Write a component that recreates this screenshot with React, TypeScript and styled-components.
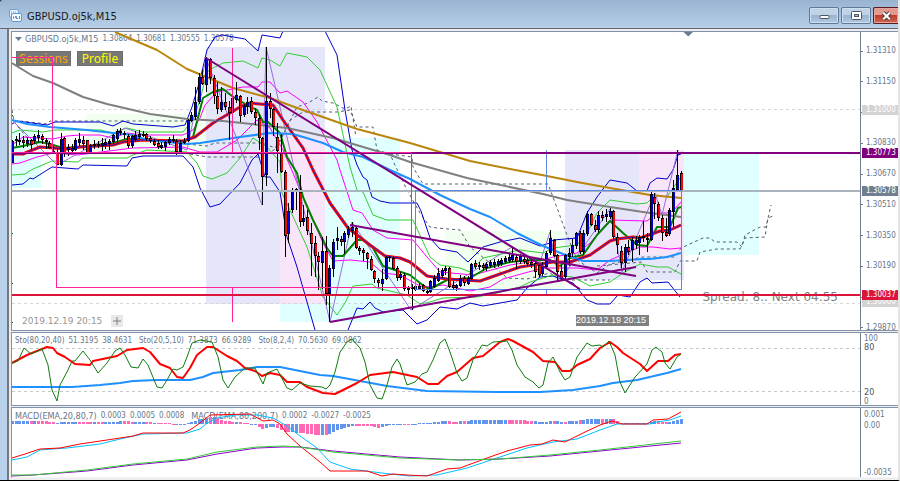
import React from "react";
import styled, { createGlobalStyle } from "styled-components";

const GlobalStyle = createGlobalStyle`
  * { box-sizing: border-box; }
  html, body { margin: 0; padding: 0; }
  body { background: #3a4048; font-family: "DejaVu Sans Condensed", "DejaVu Sans", sans-serif; }
`;

/* ---------- window chrome ---------- */

const Window = styled.div`
  display: flex;
  flex-direction: column;
  height: 100vh;
  min-height: 360px;
  overflow: hidden;
  background: #b9d1ea;
  border-right: 2px solid #e4e4e4;
  border-bottom: 1px solid #000;
  border-top-left-radius: 4px;
`;

const TitleBar = styled.header`
  display: flex;
  align-items: center;
  height: 29px;
  flex: none;
  padding: 3px 0 0 9px;
  gap: 5px;
  background: linear-gradient(#99b4d1, #b7cfe8);
  border-bottom: 1px solid #6c6468;
`;

const Title = styled.h1`
  flex: 1;
  margin: 0;
  padding-top: 2px;
  font-size: 11px;
  font-weight: 400;
  line-height: 16px;
  color: #1a1a1a;
`;

const Controls = styled.div`
  display: flex;
  gap: 2px;
  height: 17px;
`;

const ControlButton = styled.button<{ $danger?: boolean }>`
  display: flex;
  align-items: center;
  justify-content: center;
  width: ${(p) => (p.$danger ? 25 : 30)}px;
  height: 17px;
  padding: 0;
  border: 1px solid ${(p) => (p.$danger ? "#5a1c1c" : "#5f7896")};
  border-right-width: ${(p) => (p.$danger ? 0 : 1)}px;
  border-radius: ${(p) => (p.$danger ? "2px 0 0 2px" : "2px")};
  box-shadow: inset 0 0 0 1px ${(p) => (p.$danger ? "#e5a59c" : "#cfdfef")};
  background: ${(p) =>
    p.$danger
      ? "linear-gradient(#e29a8e 0 45%, #bf3a28 50%, #cf6a50)"
      : "linear-gradient(#bfd2e6 0 45%, #98b3d0 50%, #b2cae2)"};
`;

const Client = styled.main`
  flex: 1;
  min-height: 0;
  display: grid;
  grid-template-rows: minmax(0, 1fr) 74px 71px;
  gap: 1px;
  margin-left: 7px;
  padding: 2px 0 2px 2px;
  border-left: 2px solid #77787c;
  background: #eeeeee;
`;

const Panel = styled.section`
  display: flex;
  min-width: 0;
  min-height: 0;
  overflow: hidden;
  border: 1px solid #8292a8;
  border-right: 0;
  background: #fff;
  &:last-child {
    border-bottom-color: #f4f4f4;
  }
`;

const Plot = styled.div`
  position: relative;
  flex: 1;
  min-width: 0;
`;

/* Lines are painted over the legends, as the chart is the top layer. */
const Canvas = styled.svg`
  position: relative;
  z-index: 1;
  display: block;
  width: 100%;
  height: 100%;
  pointer-events: none;
`;

const Axis = styled.div`
  position: relative;
  flex: none;
  width: 38px;
  display: flex;
  flex-direction: column;
  justify-content: space-between;
  border-left: 1px solid #708090;
  font-size: 8px;
  line-height: 10px;
  color: #66768a;
`;

const PriceAxis = styled(Axis)`
  padding-top: 14px;
  margin-bottom: -3px;
`;

const Tick = styled.span`
  display: flex;
  align-items: center;
  gap: 3px;
  &::before {
    content: "";
    width: 2px;
    height: 1px;
    background: #708090;
  }
`;

const PriceTag = styled.span<{ $color: string }>`
  position: absolute;
  left: 1px;
  right: 0;
  height: 10px;
  margin-top: -5px;
  padding-left: 4px;
  color: #fff;
  background: ${(p) => p.$color};
`;

const SubAxis = styled(Axis)`
  padding: 1px 0 0 3px;
  margin-bottom: -1px;
`;

const TickGroup = styled.div<{ $line: number }>`
  display: flex;
  flex-direction: column;
  line-height: ${(p) => p.$line}px;
`;

const Level = styled.span<{ $dark?: boolean }>`
  font-size: ${(p) => (p.$dark ? 9 : 8)}px;
  color: ${(p) => (p.$dark ? "#4c5561" : "#66768a")};
`;

/* ---------- overlays on the plots ---------- */

const Legend = styled.div<{ $gap?: number }>`
  position: absolute;
  top: ${(p) => (p.$gap ? 2 : 3)}px;
  left: 3px;
  display: flex;
  align-items: center;
  gap: ${(p) => p.$gap ?? 7}px;
  line-height: 10px;
  color: #66768a;
  white-space: nowrap;
`;

const Series = styled.span<{ $small?: boolean }>`
  display: flex;
  gap: 4px;
  font-size: ${(p) => (p.$small ? 8 : 9)}px;
`;

const Value = styled.span`
  font-size: 8px;
`;

const Actions = styled.div`
  position: absolute;
  top: 19px;
  left: 4px;
  display: flex;
  gap: 6px;
`;

const ActionButton = styled.button<{ $color: string; $width: number }>`
  width: ${(p) => p.$width}px;
  height: 15px;
  padding: 0;
  border: 1px solid #6f6f6f;
  background: #787878;
  color: ${(p) => p.$color};
  font-family: "Noto Sans", "Open Sans", sans-serif;
  font-size: 12px;
  line-height: 13px;
  text-align: center;
`;

const Footer = styled.div`
  position: absolute;
  left: 10px;
  bottom: 3px;
  display: flex;
  align-items: center;
  gap: 9px;
  font-family: "DejaVu Sans", sans-serif;
  font-size: 9px;
  line-height: 12px;
  color: #969696;
`;

const AddButton = styled.button`
  display: flex;
  align-items: center;
  justify-content: center;
  width: 12px;
  height: 12px;
  padding: 0;
  border: 0;
  background: #e8e8e8;
`;

const DateMarker = styled.time`
  position: absolute;
  left: 66.5%;
  bottom: 4px;
  width: 73px;
  height: 11px;
  background: #808080;
  color: #fff;
  font-family: "Liberation Sans", sans-serif;
  font-size: 9px;
  line-height: 11px;
  white-space: nowrap;
`;

const Spread = styled.p`
  position: absolute;
  right: 22px;
  bottom: 25px;
  margin: 0;
  font-family: "DejaVu Sans", sans-serif;
  font-size: 12px;
  line-height: 16px;
  color: #808080;
`;

/* ---------- chart data ---------- */

const FIRST_X = 12;
const STEP = 3.735;
const barX = (i: number) => Math.round(FIRST_X + i * STEP);

// body top, body bottom, high, low, colour (b = rising, r = falling)
const CANDLES = `
141 163 140 163 b;139 141 136 146 r;140 142 133 145 b;140 143 136 148 r;140 144 137 147 b;140 145 139 150 r;136 141 134 144 b;135 138 130 142 b;
136 140 134 144 r;140 142 138 149 r;143 148 141 149 r;151 153 146 154 r;153 165 149 165 r;139 165 133 166 b;138 153 137 157 r;147 150 144 156 b;
148 151 144 153 b;140 150 138 151 b;139 143 133 146 b;140 144 136 150 r;140 153 140 154 r;145 153 144 154 b;144 146 140 149 b;144 146 141 148 b;
143 146 138 151 b;142 145 139 149 b;141 144 139 150 b;135 142 134 144 b;131 139 129 143 b;131 133 128 135 b;133 135 131 139 r;136 146 134 148 r;
136 146 135 148 b;135 140 131 142 b;134 137 130 139 b;134 136 131 137 r;134 139 133 141 r;138 141 136 143 r;141 145 139 146 r;143 147 140 149 r;
145 148 142 149 b;142 147 141 151 b;139 143 137 145 b;139 141 135 143 r;141 152 139 155 r;143 152 140 154 b;141 143 138 144 b;120 141 119 142 b;
115 121 112 122 b;102 117 87 120 b;77 102 73 104 b;77 84 70 85 r;58 85 57 92 b;59 78 58 84 r;78 96 75 104 r;96 109 82 114 r;
102 110 87 112 b;102 107 93 110 r;107 113 101 140 r;98 113 93 115 b;95 100 82 103 b;96 116 95 122 r;106 115 104 117 b;102 107 97 114 b;
101 112 97 114 r;112 118 108 125 r;118 138 114 150 r;138 177 137 205 r;101 175 47 186 b;101 109 93 118 r;109 127 108 136 r;137 151 123 173 r;
152 172 134 173 r;172 236 170 257 r;211 234 203 243 b;190 210 188 213 b;189 191 188 210 r;192 222 175 227 r;218 222 205 226 b;217 231 210 235 r;
233 244 223 276 r;243 256 236 277 r;256 262 252 290 r;251 263 237 289 b;251 294 236 305 r;268 294 265 322 b;242 269 239 277 b;238 241 227 250 b;
239 242 236 246 r;233 242 231 254 b;229 235 226 238 b;227 231 222 237 b;228 248 227 249 r;248 251 246 255 r;250 253 248 261 r;253 259 252 269 r;
259 270 256 271 r;271 279 270 283 r;280 283 278 288 r;279 284 269 291 b;257 279 256 280 b;257 258 256 262 r;258 269 257 270 r;268 278 266 281 r;
274 278 272 280 b;275 289 273 291 r;288 290 286 295 r;287 289 284 310 b;286 290 284 291 b;286 289 283 290 b;285 291 284 292 r;291 293 290 295 r;
281 292 280 293 b;278 287 275 288 b;273 281 268 282 b;270 276 268 278 b;268 271 266 275 b;268 287 267 288 r;285 288 281 289 r;285 288 284 291 b;
278 286 275 287 b;278 283 276 286 r;278 284 276 285 b;264 279 263 280 b;263 267 260 269 r;265 267 262 270 r;265 268 263 271 r;264 268 262 271 b;
262 266 260 268 b;262 265 259 268 b;261 265 259 267 b;260 264 258 266 b;258 262 256 264 b;257 261 254 263 b;255 260 247 262 b;257 262 255 269 r;
256 262 254 264 b;259 262 256 264 r;260 264 258 266 r;262 265 259 268 r;263 272 261 278 r;265 275 264 277 r;266 274 262 276 b;253 267 251 269 b;
238 253 230 255 b;240 256 239 257 r;255 272 254 282 r;271 278 265 281 r;255 277 254 280 b;253 257 248 266 b;245 253 239 257 b;233 246 232 249 b;
233 252 231 254 r;233 252 230 255 b;214 234 211 236 b;214 225 213 226 r;225 230 220 232 r;215 230 211 233 b;215 218 211 221 r;214 217 209 222 b;
211 217 208 219 b;211 237 210 239 r;237 245 233 254 r;251 263 246 268 r;247 263 244 272 b;247 252 240 255 r;240 250 237 262 b;240 245 236 249 b;
237 243 235 255 b;236 238 221 242 b;238 240 233 252 r;194 240 192 241 b;197 204 193 219 r;204 218 202 221 r;218 233 215 241 r;232 236 218 237 r;
210 234 208 236 b;188 212 180 227 b;175 190 150 191 b;173 191 171 195 r`
  .trim()
  .split(";")
  .map((row) => {
    const [top, bottom, high, low, dir] = row.trim().split(" ");
    return { top: +top, bottom: +bottom, high: +high, low: +low, up: dir === "b" };
  });

type Line = { color: string; width?: number; dash?: string; points: string };

const CLOUDS: Line[] = [
  "12,110 14,122 30,141 50,143 57,156",
  "20,121 47,124 50,121 187,121",
  "187,144 207,146 215,143 262,143 275,148 283,135 287,127 297,107 308,103 318,97 322,101 333,103 345,109 351,106 356,137",
  "190,154 207,157 262,157 277,148 290,120 303,112 337,112 350,110 357,127 373,127 377,150 390,154 394,163 407,190 420,213 430,227 437,228 460,230 470,247 490,263 507,278 527,279 550,273 560,280 610,280",
  "390,154 412,157 413,167 423,184 548,184 553,197 567,235 577,260 597,273 610,264 643,257 675,257 681,248 703,238 710,238 715,242 737,242 742,247 745,235 760,227 766,227 771,205",
  "597,266 642,262 647,272 675,272 680,261 697,261 700,252 717,249 740,249 745,238 765,237 768,218 773,216",
].map((points) => ({ color: "#4f5d6c", dash: "3 3", points }));

const BANDS: Line[] = [
  { color: "#0000cd", points: "12,124 17,121 47,125 55,122 100,122 113,126 123,121 133,124 173,127 185,125 192,107 200,80 207,50 215,37 222,35 245,39 258,51 262,35 280,38 283,31" },
  { color: "#0000cd", points: "325,31 337,55 345,110 352,150 357,165 363,177 367,180 372,197 380,201 390,203 417,203 421,211 430,238 440,249 457,252 468,262 483,247 500,242 520,238 540,246 550,243 553,240 577,238 587,213 597,197 610,180 627,183 637,191 647,191 650,183 657,178 667,179 673,170 678,155 681,154" },
  { color: "#0000cd", points: "12,185 23,184 30,178 33,179 52,167 78,169 83,165 127,166 132,158 143,156 183,156 193,167 200,188 210,207 220,204 240,183 252,160 258,154 265,177 270,177 280,192 287,237 297,267 315,330" },
  { color: "#0000cd", points: "348,330 357,308 363,309 370,302 375,308 383,312 403,310 417,324 427,320 440,307 457,309 470,303 483,306 500,303 517,300 527,288 540,277 553,276 573,283 587,300 597,304 610,304 618,295 630,297 640,282 647,278 652,283 668,282 680,297" },
  { color: "#32cd32", points: "12,133 20,130 43,132 55,130 100,130 113,133 127,128 143,132 183,132 193,120 200,100 207,72 213,68 223,63 243,61 258,68 262,58 270,60 280,66 287,53 307,57 320,70 337,107 350,167 357,190 363,192 373,215 387,220 413,220 430,257 440,265 460,268 470,272 483,258 520,250 543,253 553,248 577,245 587,233 597,213 610,200 637,204 647,203 655,195 667,197 673,188 680,178" },
  { color: "#32cd32", points: "12,175 25,174 33,169 52,161 78,162 83,158 127,158 133,155 147,150 187,152 197,163 203,176 212,179 227,173 240,158 253,138 267,147 280,162 282,193 290,210 307,247 323,297 337,315 345,303 353,286 372,284 377,288 390,291 407,295 420,304 430,302 443,298 477,297 497,293 520,287 530,282 553,275 573,277 590,286 610,282 623,273 640,264 657,267 668,267 681,274" },
  { color: "#f0f", points: "12,145 23,137 53,139 67,136 80,135 100,135 113,138 127,133 143,135 183,135 193,130 200,118 205,105 217,92 243,87 258,87 262,82 270,82 280,93 287,91 303,102 317,122 337,160 340,170 353,210 362,213 373,230 387,238 413,240 427,257 440,272 473,275 510,265 543,260 553,257 577,253 590,243 610,220 647,221 657,213 667,213 673,211 681,202" },
  { color: "#f0f", points: "12,164 20,163 37,157 53,153 77,155 133,148 183,147 200,152 217,152 237,140 257,120 270,128 283,150 293,173 303,197 313,220 323,243 333,261 350,260 370,262 383,273 400,275 420,286 430,287 443,285 470,291 490,287 503,279 543,268 577,268 597,270 610,260 640,247 653,247 670,249 681,248" },
];

const ZIGZAG: Line[] = [
  { color: "#9370db", points: "12,120 57,165 125,128 187,150 206,58 262,205 266,47 330,322 352,222 411,310 512,247 540,262 550,232 559,282 610,209 622,272 655,193 662,215 678,150" },
];

const AVERAGES: Line[] = [
  { color: "#008000", width: 2, points: "12,148 23,146 40,142 50,144 63,148 77,147 113,143 127,139 143,139 167,142 183,142 193,137 203,98 213,92 223,89 232,96 247,105 257,110 263,122 268,122 280,133 287,157 297,173 303,197 313,220 327,248 333,256 343,256 357,240 363,240 373,248 383,266 410,275 420,283 427,288 432,288 447,280 470,278 487,268 510,262 530,260 550,260 560,266 570,258 583,255 597,235 610,221 623,233 637,245 647,246 657,227 670,227 678,208 681,207" },
  { color: "#ff0000", width: 3, points: "12,154 23,154 30,151 40,147 67,149 80,147 113,145 123,142 143,140 183,141 195,137 213,123 230,113 240,107 250,103 260,104 273,105 283,120 303,148 313,170 330,203 348,228 370,245 385,256 400,258 410,262 427,276 447,279 480,281 500,274 520,267 553,262 570,262 590,255 610,241 617,239 633,237 640,238 660,231 670,230 681,225" },
  { color: "#1e90ff", width: 2, points: "12,120 27,124 50,127 87,130 113,133 133,135 147,140 187,144 200,143 240,137 270,133 293,134 323,143 343,152 363,157 390,170 410,179 440,195 470,209 490,217 517,233 543,246 563,254 583,261 610,261 643,259 650,259 667,257 681,253" },
  { color: "#808080", width: 2, points: "12,63 33,76 53,83 83,97 107,104 150,114 187,119 223,121 287,128 333,138 390,155 410,162 467,178 543,194 567,200 610,207 643,212 681,217" },
  { color: "#b8860b", width: 2, points: "115,32 157,50 187,69 233,88 270,98 300,109 357,129 410,143 430,149 470,161 510,169 547,176 577,182 610,188 650,195 681,198" },
];
const CORE: Line = { ...AVERAGES[1], color: "#2a20c0", width: 1 };

const TRENDS: Line[] = [
  "206,58 580,289",
  "350,225 636,276",
  "330,322 636,267",
].map((points) => ({ color: "#800080", width: 2, points }));

const STOCHASTIC: Line[] = [
  { color: "#1e90ff", width: 2, points: "12,387 72,387 100,385 120,383 133,381 157,380 190,380 203,377 213,373 240,370 257,367 280,367 300,371 320,375 333,376 360,381 387,386 427,391 497,392 540,392 573,390 600,386 613,383 637,380 667,373 681,369" },
  { color: "#ff0000", width: 2, points: "12,363 27,355 47,347 53,348 57,353 65,357 75,364 90,365 93,361 117,356 127,350 143,348 150,352 160,364 170,368 177,377 183,378 190,368 197,355 207,347 213,347 227,356 237,361 245,368 255,371 262,376 270,373 280,375 287,382 300,382 307,387 323,393 335,394 357,383 370,375 393,372 417,377 428,384 438,384 447,376 457,372 473,358 483,356 500,342 508,339 513,341 533,352 543,361 555,362 562,371 570,371 577,365 590,359 600,348 610,342 617,347 623,353 640,364 647,371 658,361 668,361 675,355 681,354" },
  { color: "#0f7d0f", points: "12,363 18,361 24,348 31,354 42,349 48,365 52,390 57,401 60,385 68,370 72,361 75,361 83,351 90,360 98,373 107,363 115,351 120,348 125,355 131,367 138,368 143,359 148,365 157,387 162,388 167,380 173,369 177,370 183,367 187,357 192,343 200,340 212,342 218,357 223,380 228,388 235,377 245,368 255,368 263,384 267,373 277,369 287,388 292,390 300,383 310,386 322,387 326,389 330,385 335,372 340,352 347,342 352,339 360,348 365,362 370,385 377,398 382,399 387,385 392,367 397,359 400,364 407,385 415,382 422,374 427,372 433,360 440,343 445,339 450,352 457,373 462,381 467,378 473,360 482,345 487,346 493,342 507,341 512,350 517,365 525,377 533,382 539,388 543,385 548,363 553,357 560,372 565,380 570,377 577,357 587,343 592,346 600,345 603,347 609,341 615,355 620,382 625,393 635,377 647,364 652,350 656,347 662,352 665,363 670,369 677,357 681,354" },
];

const MACD: Line[] = [
  { color: "#00bfff", points: "12,460 27,457 40,450 67,448 100,444 120,439 143,434 187,433 200,429 207,423 217,418 235,415 257,415 273,418 287,426 300,436 317,448 330,462 350,469 390,474 410,476 437,475 467,468 500,457 527,448 553,442 577,439 600,430 617,424 650,424 657,422 670,420 681,416" },
  { color: "#ff0000", points: "12,458 25,454 40,449 60,448 80,444 107,440 133,436 143,433 183,433 190,430 200,423 210,415 250,414 263,421 273,420 280,424 287,434 300,446 320,462 330,471 350,471 367,471 382,476 393,474 407,475 427,476 447,469 460,468 487,458 507,451 530,445 542,444 553,440 565,442 583,433 600,425 612,421 622,424 647,424 653,420 668,419 681,412" },
  { color: "#9400d3", points: "12,476 33,475 87,471 133,465 187,460 217,454 257,448 283,447 300,447 333,451 400,457 460,460 500,459 550,456 600,451 681,443" },
  { color: "#32cd32", points: "12,475 33,475 87,470 133,464 187,459 217,452 257,447 283,446 300,447 333,452 400,458 460,460 500,459 550,455 600,450 681,441" },
];

const HISTOGRAM: [number, number][] = [
  [12, 3], [45, 3], [56, 1], [60, 2], [115, 2], [125, 3], [135, 2], [170, 1], [177, -1], [187, 1], [200, 5],
  [213, 7], [225, 3], [245, 1], [256, -1], [262, -5], [270, -3], [278, -4], [285, -8], [302, -9], [315, -11],
  [326, -11], [335, -7], [350, -2], [372, -2], [378, -4], [390, -1], [428, 1], [445, 3], [455, 2], [475, 4],
  [520, 4], [532, 3], [545, 2], [553, 3], [565, 2], [580, 4], [590, 5], [612, 5], [620, 1], [645, 1], [655, 3],
  [668, 2], [681, 5],
];
const PINK_RUNS: [number, number][] = [
  [28, 33], [36, 57], [78, 93], [98, 104], [123, 134], [145, 151], [155, 176], [208, 213], [217, 233], [240, 249],
  [258, 266], [277, 289], [298, 319], [323, 328], [355, 381], [403, 411], [447, 450], [453, 459], [464, 468],
  [507, 534], [552, 555], [562, 566], [579, 582], [600, 606], [611, 621], [655, 669],
];

function histogramValue(x: number) {
  const next = HISTOGRAM.findIndex(([px]) => px >= x);
  if (next <= 0) return next === 0 ? HISTOGRAM[0][1] : HISTOGRAM[HISTOGRAM.length - 1][1];
  const [x0, v0] = HISTOGRAM[next - 1];
  const [x1, v1] = HISTOGRAM[next];
  return Math.round(v0 + ((v1 - v0) * (x - x0)) / (x1 - x0));
}

/* ---------- drawing helpers ---------- */

function Lines({ items }: { items: Line[] }) {
  return (
    <>
      {items.map((l, i) => (
        <polyline key={i} points={l.points} fill="none" stroke={l.color} strokeWidth={l.width ?? 1} strokeDasharray={l.dash} strokeLinejoin="round" />
      ))}
    </>
  );
}

function Candles() {
  return (
    <g shapeRendering="crispEdges">
      {CANDLES.map((c, i) => {
        const x = barX(i);
        return (
          <g key={i}>
            <rect x={x} y={c.high} width={1} height={c.low - c.high} fill="#000" />
            <rect x={x - 1} y={c.top} width={3} height={Math.max(1, c.bottom - c.top)} fill="#000" />
            {c.bottom - c.top > 2 && (
              <rect x={x - 0.5} y={c.top + 1} width={2} height={c.bottom - c.top - 2} fill={c.up ? "#0000cd" : "#ee0808"} />
            )}
          </g>
        );
      })}
    </g>
  );
}

function PriceChart() {
  return (
    <Canvas viewBox="12 32 848 298" preserveAspectRatio="none" role="img" aria-label="GBPUSD candlestick chart">
      <g shapeRendering="crispEdges">
        <rect x={12} y={129} width={29} height={59} fill="#e0ffff" />
        <rect x={86} y={114} width={120} height={42} fill="#f0fff0" />
        <rect x={280} y={138} width={120} height={184} fill="#e0ffff" />
        <rect x={206} y={47} width={119} height={257} fill="#e6e6fa" />
        <rect x={280} y={138} width={45} height={166} fill="#f9e5f9" />
        <rect x={445} y={231} width={120} height={58} fill="#f0fff0" />
        <rect x={639} y={153} width={120} height={102} fill="#e0ffff" />
        <rect x={565} y={150} width={119} height={130} fill="#e6e6fa" />
        <rect x={639} y={150} width={45} height={105} fill="#f9e5f9" />
        <path d="M12 109.5H860M12 303.5H860" stroke="#d6d6d6" strokeDasharray="3 3" fill="none" />
      </g>
      <Lines items={CLOUDS} />
      <Lines items={BANDS} />
      <Lines items={ZIGZAG} />
      <Lines items={AVERAGES} />
      <Lines items={[CORE]} />
      <Candles />
      <g shapeRendering="crispEdges" fill="none">
        <path d="M12 191H860" stroke="#a9b4bf" strokeWidth={2} />
        <path d="M415 190.5H681.5V289.5H415.5V190.5M546.5 150V190M546.5 289V295" stroke="#5b86e5" />
        <path d="M12 153H860" stroke="#800080" strokeWidth={2} />
        <path d="M12 57.5H52.5V152M56.5 152V287.5H411.5V153M232.5 48V152M232.5 288V322M12 152.5H411" stroke="#ff2299" />
        <path d="M12 295H860" stroke="#dc143c" strokeWidth={2} />
        <path d="M12 115h1M12 233h1M12 283h1M12 322h1" stroke="#006400" />
      </g>
      <Lines items={TRENDS} />
      <path d="M683.5 32h9.5l-4.75 4.5z" fill="#6b7c90" />
    </Canvas>
  );
}

function StochasticChart() {
  return (
    <Canvas viewBox="12 333 848 72" preserveAspectRatio="none" role="img" aria-label="Stochastic oscillators">
      <path d="M12 348.5H860M12 391.5H860" stroke="#c8c8c8" strokeDasharray="3 3" fill="none" shapeRendering="crispEdges" />
      <Lines items={STOCHASTIC} />
    </Canvas>
  );
}

function MacdChart() {
  return (
    <Canvas viewBox="12 408 848 69" preserveAspectRatio="none" role="img" aria-label="MACD">
      <g shapeRendering="crispEdges">
        {CANDLES.map((_, i) => {
          const x = barX(i);
          const v = histogramValue(x);
          const pink = PINK_RUNS.some(([a, b]) => x >= a && x < b);
          return <rect key={i} x={x - 1} y={v > 0 ? 424 - v : 424} width={3} height={Math.max(1, Math.abs(v))} fill={pink ? "#ff69b4" : "#6495ed"} />;
        })}
      </g>
      <Lines items={MACD} />
    </Canvas>
  );
}

function Readout({ name, values, small }: { name: string; values: string[]; small?: boolean }) {
  return (
    <Series $small={small}>
      <span>{name}</span>
      {values.map((v) => <Value key={v}>{v}</Value>)}
    </Series>
  );
}

const TICKS = ["1.31310", "1.31150", "1.30990", "1.30830", "1.30670", "1.30510", "1.30350", "1.30190", "1.30030", "1.29870"];
const TAGS = [
  { price: "1.31000", color: "#d3d3d3" },
  { price: "1.30000", color: "#d3d3d3" },
  { price: "1.30773", color: "#800080" },
  { price: "1.30578", color: "#708090" },
  { price: "1.30037", color: "#dc143c" },
];
const priceTop = (price: string) => `${6 + ((1.3131 - Number(price)) / 0.0144) * 92}%`;

export default function App() {
  return (
    <>
      <GlobalStyle />
      <Window>
        <TitleBar>
          <svg width="13" height="13" viewBox="0 0 13 13" fill="none" aria-hidden="true">
            <rect x="0.5" y="0.5" width="9" height="8" rx="1.5" fill="#eaf3ff" stroke="#6a9fdc" />
            <path d="M2 3h6" stroke="#6a9fdc" strokeDasharray="1 1" />
            <path d="M2.5 6.5V4.5" stroke="#6a9fdc" />
            <rect x="2.5" y="4.5" width="10" height="8" rx="1.5" fill="#f6faff" stroke="#5c95d8" />
            <path d="M4.5 7.5v2M6 9l1-2 1 3 1-1M10.5 7v3" stroke="#4a86d0" />
          </svg>
          <Title>GBPUSD.oj5k,M15</Title>
          <Controls>
            <ControlButton type="button" aria-label="Minimize">
              <svg width="11" height="11" viewBox="0 0 11 11"><rect x="1" y="5.5" width="9" height="3" rx="1" fill="#fff" stroke="#4b5563" /></svg>
            </ControlButton>
            <ControlButton type="button" aria-label="Restore">
              <svg width="11" height="11" viewBox="0 0 11 11" fill="none">
                <rect x="0.5" y="1.5" width="10" height="8" rx="1" fill="#fff" stroke="#4b5563" />
                <rect x="3.5" y="4.5" width="4" height="2" fill="#a9c0da" stroke="#4b5563" />
              </svg>
            </ControlButton>
            <ControlButton type="button" aria-label="Close" $danger>
              <svg width="11" height="10" viewBox="0 0 11 10">
                <path d="M2.2 1.8l6.6 6.4M8.8 1.8L2.2 8.2" stroke="#4a3a42" strokeWidth="4" />
                <path d="M2.2 1.8l6.6 6.4M8.8 1.8L2.2 8.2" stroke="#fff" strokeWidth="2.2" />
              </svg>
            </ControlButton>
          </Controls>
        </TitleBar>
        <Client>
          <Panel>
            <Plot>
              <PriceChart />
              <Legend $gap={3}>
                <svg width="7" height="4" viewBox="0 0 7 4" aria-hidden="true"><path d="M0 0h7L3.5 4z" fill="#6b7c90" /></svg>
                <Readout name="GBPUSD.oj5k,M15" values={["1.30864", "1.30681", "1.30555", "1.30578"]} />
              </Legend>
              <Actions>
                <ActionButton type="button" $color="#ffa500" $width={55}>Sessions</ActionButton>
                <ActionButton type="button" $color="#ffff00" $width={46}>Profile</ActionButton>
              </Actions>
              <Footer>
                <time>2019.12.19 20:15</time>
                <AddButton type="button" aria-label="Add">
                  <svg width="8" height="8" viewBox="0 0 8 8"><path d="M4 0v8M0 4h8" stroke="#808080" /></svg>
                </AddButton>
              </Footer>
              <DateMarker>2019.12.19 20:15</DateMarker>
              <Spread>Spread: 8.. Next 04:55</Spread>
            </Plot>
            <PriceAxis>
              {TICKS.map((t) => <Tick key={t}>{t}</Tick>)}
              {TAGS.map((t) => (
                <PriceTag key={t.price} $color={t.color} style={{ top: priceTop(t.price) }}>{t.price}</PriceTag>
              ))}
            </PriceAxis>
          </Panel>
          <Panel>
            <Plot>
              <StochasticChart />
              <Legend>
                <Readout small name="Sto(80,20,40)" values={["51.3195", "38.4631"]} />
                <Readout small name="Sto(20,5,10)" values={["71.3873", "66.9289"]} />
                <Readout small name="Sto(8,2,4)" values={["70.5630", "69.0862"]} />
              </Legend>
            </Plot>
            <SubAxis>
              <TickGroup $line={9}><Level>100</Level><Level $dark>80</Level></TickGroup>
              <TickGroup $line={9}><Level $dark>20</Level><Level>0</Level></TickGroup>
            </SubAxis>
          </Panel>
          <Panel>
            <Plot>
              <MacdChart />
              <Legend>
                <Readout name="MACD(EMA,20,80,7)" values={["0.0003", "0.0005", "0.0008"]} />
                <Readout name="MACD(EMA,80,200,7)" values={["0.0002", "-0.0027", "-0.0025"]} />
              </Legend>
            </Plot>
            <SubAxis>
              <TickGroup $line={11}><Level>0.001</Level><Level>0.00</Level></TickGroup>
              <Level>-0.0035</Level>
            </SubAxis>
          </Panel>
        </Client>
      </Window>
    </>
  );
}
